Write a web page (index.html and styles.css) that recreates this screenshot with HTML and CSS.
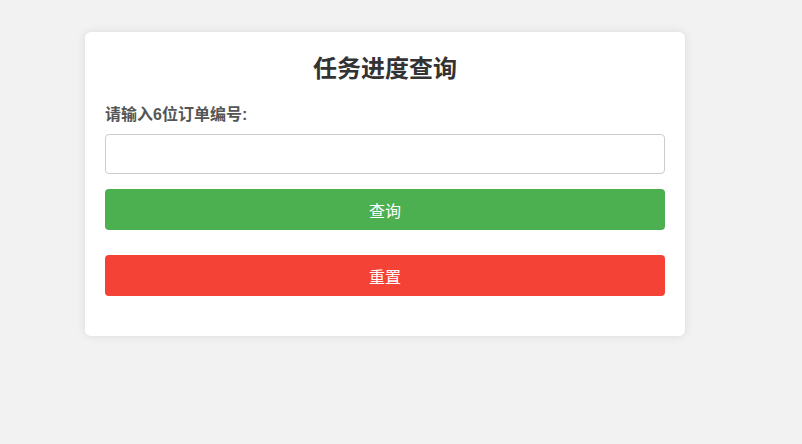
FILE: index.html
```html
<!DOCTYPE html>
<html lang="zh-CN">
<head>
<meta charset="utf-8">
<title>任务进度查询</title>
<link rel="stylesheet" href="styles.css">
</head>
<body>
<div class="card">
  <h2 class="title">任务进度查询</h2>
  <label class="label" for="order">请输入6位订单编号:</label>
  <input class="input" id="order" type="text">
  <button class="btn btn-query" type="button">查询</button>
  <button class="btn btn-reset" type="button">重置</button>
</div>
</body>
</html>
```
FILE: styles.css
```css
* { box-sizing: border-box; }
html, body { margin: 0; }
body {
  background: #f2f2f2;
  padding: 32px 85px;
  font-family: "Liberation Sans", "Noto Sans CJK SC", sans-serif;
}
.card {
  width: 600px;
  background: #fff;
  border-radius: 6px;
  box-shadow: 0 0 10px rgba(0,0,0,0.1);
  padding: 20px;
  display: flex;
  flex-direction: column;
}
.title {
  margin: 0 0 19px;
  font-size: 24px;
  line-height: 34px;
  font-weight: bold;
  color: #333;
  text-align: center;
}
.label {
  font-size: 16px;
  line-height: 20px;
  font-weight: bold;
  color: #555;
  margin-bottom: 9px;
}
.input {
  height: 40px;
  border: 1px solid #ccc;
  border-radius: 4px;
  padding: 8px 10px;
  font-size: 16px;
  margin: 0 0 15px;
}
.btn {
  height: 41px;
  border: none;
  border-radius: 4px;
  color: #fff;
  font-size: 16px;
  font-family: "Liberation Sans", "Noto Sans CJK SC", sans-serif;
  margin: 0;
}
.btn-query { background: #4caf50; margin-bottom: 25px; }
.btn-reset { background: #f44336; margin-bottom: 20px; }
```
